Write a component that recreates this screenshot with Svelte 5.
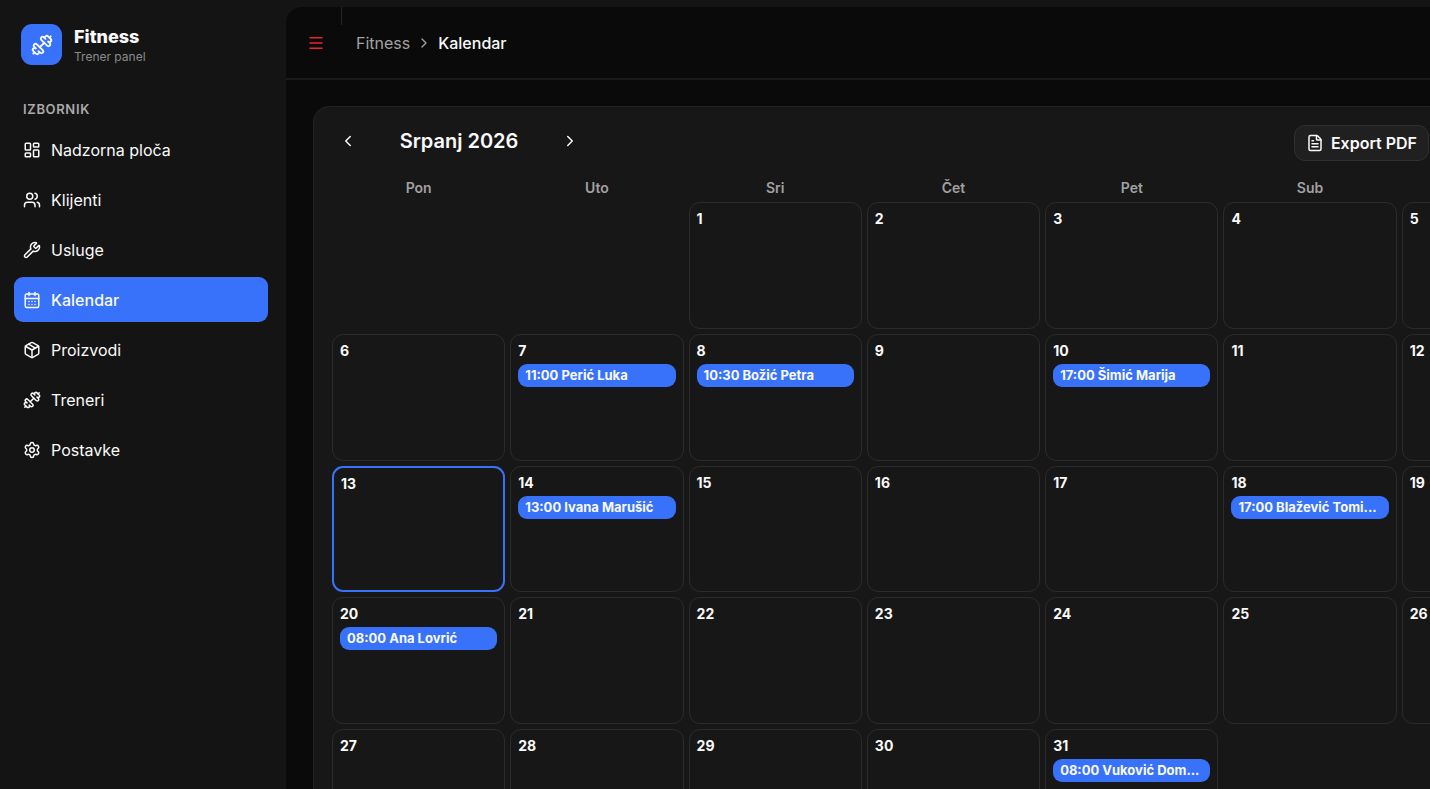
<script lang="ts">
  type IconName =
    | "dashboard"
    | "users"
    | "wrench"
    | "calendar"
    | "package"
    | "dumbbell"
    | "settings"
    | "file"
    | "menu"
    | "left"
    | "right";

  const ICONS: Record<IconName, string[]> = {
    dashboard: [
      "M4 3h5a1 1 0 0 1 1 1v7a1 1 0 0 1-1 1H4a1 1 0 0 1-1-1V4a1 1 0 0 1 1-1z",
      "M15 3h5a1 1 0 0 1 1 1v3a1 1 0 0 1-1 1h-5a1 1 0 0 1-1-1V4a1 1 0 0 1 1-1z",
      "M15 12h5a1 1 0 0 1 1 1v7a1 1 0 0 1-1 1h-5a1 1 0 0 1-1-1v-7a1 1 0 0 1 1-1z",
      "M4 16h5a1 1 0 0 1 1 1v3a1 1 0 0 1-1 1H4a1 1 0 0 1-1-1v-3a1 1 0 0 1 1-1z",
    ],
    users: [
      "M16 21v-2a4 4 0 0 0-4-4H6a4 4 0 0 0-4 4v2",
      "M16 3.128a4 4 0 0 1 0 7.744",
      "M22 21v-2a4 4 0 0 0-3-3.87",
      "M5 7a4 4 0 1 0 8 0a4 4 0 1 0-8 0",
    ],
    wrench: [
      "M14.7 6.3a1 1 0 0 0 0 1.4l1.6 1.6a1 1 0 0 0 1.4 0l3.106-3.105c.32-.322.863-.22.983.218a6 6 0 0 1-8.259 7.057l-7.91 7.91a1 1 0 0 1-2.999-3l7.91-7.91a6 6 0 0 1 7.057-8.259c.438.12.54.662.219.984z",
    ],
    calendar: [
      "M8 2v4",
      "M16 2v4",
      "M5 4h14a2 2 0 0 1 2 2v14a2 2 0 0 1-2 2H5a2 2 0 0 1-2-2V6a2 2 0 0 1 2-2z",
      "M3 10h18",
      "M8 14h.01",
      "M12 14h.01",
      "M16 14h.01",
      "M8 18h.01",
      "M12 18h.01",
      "M16 18h.01",
    ],
    package: [
      "M11 21.73a2 2 0 0 0 2 0l7-4A2 2 0 0 0 21 16V8a2 2 0 0 0-1-1.73l-7-4a2 2 0 0 0-2 0l-7 4A2 2 0 0 0 3 8v8a2 2 0 0 0 1 1.73z",
      "M12 22V12",
      "M3.29 7 12 12 20.71 7",
      "m7.5 4.27 9 5.15",
    ],
    dumbbell: [
      "M17.596 12.768a2 2 0 1 0 2.829-2.829l-1.768-1.767a2 2 0 0 0 2.828-2.829l-2.828-2.828a2 2 0 0 0-2.829 2.828l-1.767-1.768a2 2 0 1 0-2.829 2.829z",
      "m2.5 21.5 1.4-1.4",
      "m20.1 3.9 1.4-1.4",
      "M5.343 21.485a2 2 0 1 0 2.829-2.828l1.767 1.768a2 2 0 1 0 2.829-2.829l-6.364-6.364a2 2 0 1 0-2.829 2.829l1.768 1.767a2 2 0 0 0-2.828 2.829z",
      "m9.6 14.4 4.8-4.8",
    ],
    settings: [
      "M9.671 4.136a2.34 2.34 0 0 1 4.659 0 2.34 2.34 0 0 0 3.319 1.915 2.34 2.34 0 0 1 2.33 4.033 2.34 2.34 0 0 0 0 3.831 2.34 2.34 0 0 1-2.33 4.033 2.34 2.34 0 0 0-3.319 1.915 2.34 2.34 0 0 1-4.659 0 2.34 2.34 0 0 0-3.32-1.915 2.34 2.34 0 0 1-2.33-4.033 2.34 2.34 0 0 0 0-3.831A2.34 2.34 0 0 1 6.35 6.051a2.34 2.34 0 0 0 3.319-1.915",
      "M9 12a3 3 0 1 0 6 0a3 3 0 1 0-6 0",
    ],
    file: [
      "M6 22a2 2 0 0 1-2-2V4a2 2 0 0 1 2-2h8a2.4 2.4 0 0 1 1.704.706l3.588 3.588A2.4 2.4 0 0 1 20 8v12a2 2 0 0 1-2 2z",
      "M14 2v5a1 1 0 0 0 1 1h5",
      "M10 9H8",
      "M16 13H8",
      "M16 17H8",
    ],
    menu: ["M4 5h16", "M4 12h16", "M4 19h16"],
    left: ["m15 18-6-6 6-6"],
    right: ["m9 18 6-6-6-6"],
  };

  const nav: { label: string; icon: IconName }[] = [
    { label: "Nadzorna ploča", icon: "dashboard" },
    { label: "Klijenti", icon: "users" },
    { label: "Usluge", icon: "wrench" },
    { label: "Kalendar", icon: "calendar" },
    { label: "Proizvodi", icon: "package" },
    { label: "Treneri", icon: "dumbbell" },
    { label: "Postavke", icon: "settings" },
  ];

  const weekdays = ["Pon", "Uto", "Sri", "Čet", "Pet", "Sub", "Ned"];

  const months = [
    "Siječanj", "Veljača", "Ožujak", "Travanj", "Svibanj", "Lipanj",
    "Srpanj", "Kolovoz", "Rujan", "Listopad", "Studeni", "Prosinac",
  ];

  const events: Record<string, string[]> = {
    "2026-7-7": ["11:00 Perić Luka"],
    "2026-7-8": ["10:30 Božić Petra"],
    "2026-7-10": ["17:00 Šimić Marija"],
    "2026-7-14": ["13:00 Ivana Marušić"],
    "2026-7-18": ["17:00 Blažević Tomi..."],
    "2026-7-20": ["08:00 Ana Lovrić"],
    "2026-7-31": ["08:00 Vuković Dom..."],
  };
  const today = "2026-7-13";

  let active = $state("Kalendar");
  let year = $state(2026);
  let month = $state(7);

  // Weeks start on Monday, so Sunday moves from 0 to 6.
  const offset = $derived((new Date(year, month - 1, 1).getDay() + 6) % 7);
  const dayCount = $derived(new Date(year, month, 0).getDate());
  const days = $derived(
    Array.from({ length: dayCount }, (_, i) => {
      const key = `${year}-${month}-${i + 1}`;
      return { key, day: i + 1, items: events[key] ?? [] };
    })
  );

  function shift(by: number) {
    const d = new Date(year, month - 1 + by, 1);
    year = d.getFullYear();
    month = d.getMonth() + 1;
  }
</script>

{#snippet icon(name: IconName)}
  <svg class="icon" viewBox="0 0 24 24" aria-hidden="true">
    {#each ICONS[name] as d}
      <path {d} />
    {/each}
  </svg>
{/snippet}

<div class="shell">
  <aside class="sidebar">
    <div class="brand">
      <div class="logo">{@render icon("dumbbell")}</div>
      <div class="brand-text">
        <span class="brand-name">Fitness</span>
        <span class="brand-sub">Trener panel</span>
      </div>
    </div>

    <div class="group-label">Izbornik</div>
    <nav class="nav">
      {#each nav as item (item.label)}
        <a
          href="#{item.icon}"
          class="nav-item"
          class:active={item.label === active}
          onclick={() => (active = item.label)}
        >
          {@render icon(item.icon)}
          <span>{item.label}</span>
        </a>
      {/each}
    </nav>
  </aside>

  <main class="main">
    <header class="topbar">
      <button class="menu" aria-label="Izbornik">{@render icon("menu")}</button>
      <span class="divider"></span>
      <nav class="crumbs">
        <a href="#fitness">Fitness</a>
        {@render icon("right")}
        <span class="current">Kalendar</span>
      </nav>
    </header>

    <section class="card">
      <div class="toolbar">
        <div class="month-nav">
          <button class="arrow" aria-label="Prethodni mjesec" onclick={() => shift(-1)}>
            {@render icon("left")}
          </button>
          <h1>{months[month - 1]} {year}</h1>
          <button class="arrow" aria-label="Sljedeći mjesec" onclick={() => shift(1)}>
            {@render icon("right")}
          </button>
        </div>
        <button class="export">
          {@render icon("file")}
          <span>Export PDF</span>
        </button>
      </div>

      <div class="weekdays">
        {#each weekdays as name}
          <span>{name}</span>
        {/each}
      </div>

      <div class="days">
        {#each { length: offset } as _}
          <div></div>
        {/each}
        {#each days as d (d.key)}
          <div class="day" class:today={d.key === today}>
            <span class="number">{d.day}</span>
            {#each d.items as text}
              <button class="event">{text}</button>
            {/each}
          </div>
        {/each}
      </div>
    </section>
  </main>
</div>

<style>
  :global(body) {
    background: #141414;
  }

  .shell {
    --blue: #3872fa;
    --text: #fafafa;
    --muted: #a1a1a1;
    display: flex;
    height: 100vh;
    overflow: hidden;
    background: #141414;
    color: var(--text);
    font-family: Inter, "Noto Sans", sans-serif;
    font-size: 16px;
    line-height: 24px;
  }

  .shell * {
    box-sizing: border-box;
  }

  button {
    font: inherit;
    color: inherit;
    background: none;
    border: 0;
    padding: 0;
    cursor: pointer;
  }

  a {
    color: inherit;
    text-decoration: none;
  }

  .icon {
    width: 18px;
    height: 18px;
    flex: none;
    fill: none;
    stroke: currentColor;
    stroke-width: 2;
    stroke-linecap: round;
    stroke-linejoin: round;
  }

  /* Sidebar */
  .sidebar {
    flex: none;
    width: 286px;
    padding: 24px 18px 0 14px;
  }

  .brand {
    display: flex;
    align-items: center;
    gap: 12px;
    padding-left: 7px;
  }

  .logo {
    display: grid;
    place-items: center;
    width: 41px;
    height: 41px;
    border-radius: 11px;
    background: var(--blue);
  }

  .logo .icon {
    width: 22px;
    height: 22px;
  }

  .brand-text {
    display: flex;
    flex-direction: column;
    padding-top: 2px;
  }

  .brand-name {
    font-size: 18px;
    line-height: 22px;
    font-weight: 800;
  }

  .brand-sub {
    font-size: 12px;
    line-height: 17px;
    color: #8a8a8a;
  }

  .group-label {
    margin: 32px 0 5px;
    padding: 0 9px;
    font-size: 13px;
    line-height: 25px;
    font-weight: 600;
    letter-spacing: 0.05em;
    text-transform: uppercase;
    color: #aaaaaa;
  }

  .nav {
    display: flex;
    flex-direction: column;
    gap: 5px;
  }

  .nav-item {
    display: flex;
    align-items: center;
    gap: 10px;
    height: 45px;
    padding: 0 9px;
    border-radius: 9px;
  }

  .nav-item.active {
    background: var(--blue);
    font-weight: 500;
  }

  /* Main column */
  .main {
    flex: 1;
    min-width: 0;
    margin-top: 7px;
    border-top-left-radius: 16px;
    background: #0a0a0a;
  }

  .topbar {
    display: flex;
    align-items: center;
    height: 73px;
    padding-left: 21px;
    border-bottom: 2px solid #1a1a1a;
  }

  .menu {
    display: flex;
    color: #e7242e;
  }

  .divider {
    align-self: flex-start;
    width: 1px;
    height: 18px;
    margin: 0 14px 0 16px;
    background: #262626;
  }

  .crumbs {
    display: flex;
    align-items: center;
    gap: 6px;
    color: var(--muted);
  }

  .crumbs .icon {
    width: 16px;
    height: 16px;
  }

  .current {
    color: var(--text);
    font-weight: 500;
  }

  /* Calendar */
  .card {
    min-width: 1281px;
    margin: 26px 27px 27px;
    padding: 18px;
    border: 1px solid #222222;
    border-radius: 16px;
    background: #171717;
  }

  .toolbar {
    display: flex;
    align-items: center;
    justify-content: space-between;
    padding-right: 146px;
  }

  .month-nav {
    display: flex;
    align-items: center;
    margin-bottom: 4px;
  }

  .arrow {
    display: grid;
    place-items: center;
    width: 32px;
    height: 32px;
  }

  h1 {
    width: 190px;
    margin: 0;
    font-size: 20px;
    line-height: 32px;
    font-weight: 600;
    text-align: center;
  }

  .export {
    display: flex;
    align-items: center;
    gap: 7px;
    height: 36px;
    padding: 0 11px;
    border: 1px solid #303030;
    border-radius: 11px;
    background: #202020;
    font-weight: 600;
  }

  .weekdays,
  .days {
    display: grid;
    grid-template-columns: repeat(7, minmax(0, 1fr));
    gap: 5px;
  }

  .weekdays {
    padding: 17px 0 4px;
    font-size: 14px;
    line-height: 20px;
    font-weight: 600;
    text-align: center;
    color: var(--muted);
  }

  .days {
    min-height: 654px;
    grid-auto-rows: 1fr;
  }

  .day {
    display: flex;
    flex-direction: column;
    gap: 3px;
    padding: 6px 7px;
    border: 1px solid #2b2b2b;
    border-radius: 11px;
  }

  .day.today {
    border: 2px solid var(--blue);
  }

  .number {
    font-size: 14px;
    line-height: 20px;
    font-weight: 700;
  }

  .event {
    height: 23px;
    padding: 0 7px;
    border-radius: 9px;
    background: var(--blue);
    font-size: 13px;
    line-height: 23px;
    font-weight: 700;
    text-align: left;
    white-space: nowrap;
    overflow: hidden;
    text-overflow: ellipsis;
  }
</style>
